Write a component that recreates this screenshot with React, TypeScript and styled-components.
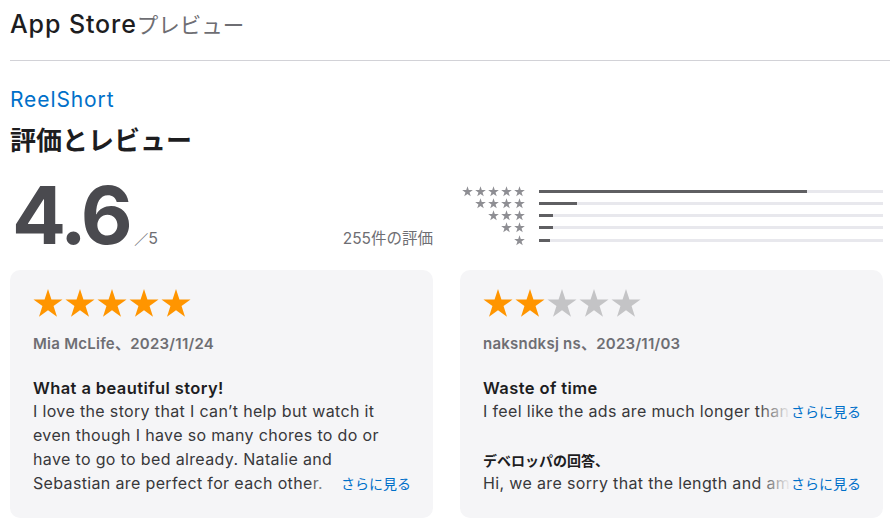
import React from "react";
import styled, { createGlobalStyle } from "styled-components";

const GlobalStyle = createGlobalStyle`
  html, body { margin: 0; padding: 0; background: #ffffff; }
  body {
    font-family: Inter, "Noto Sans CJK JP", sans-serif;
    color: #1d1d1f;
    -webkit-font-smoothing: antialiased;
  }
  * { box-sizing: border-box; }
`;

const CJK = `"Noto Sans CJK JP", Inter, sans-serif`;
const CARD_BG = "#f5f5f7";

const Page = styled.div`
  width: 891px;
  padding-left: 10px;
`;

const Header = styled.header`
  height: 61px;
  margin-right: 1px;
  padding-top: 8px;
  border-bottom: 1px solid #d2d2d7;
`;

const HeaderTitle = styled.h1`
  margin: 0;
  font-size: 25px;
  line-height: 32px;
  font-weight: 500;
  letter-spacing: 0.9px;
  color: #1d1d1f;
`;

const HeaderSub = styled.span`
  font-family: ${CJK};
  font-size: 21.5px;
  font-weight: 400;
  color: #6e6e73;
  letter-spacing: 0;
`;

const Main = styled.main`
  width: 873px;
`;

const AppName = styled.a`
  display: block;
  margin-top: 26px;
  font-size: 21px;
  line-height: 26px;
  letter-spacing: 0.9px;
  color: #0070c9;
  text-decoration: none;
`;

const SectionTitle = styled.h2`
  margin: 10px 0 0;
  font-family: ${CJK};
  font-size: 26px;
  line-height: 32px;
  font-weight: 700;
  color: #1d1d1f;
`;

const TwoCols = styled.div<{ $top: number }>`
  display: grid;
  grid-template-columns: 423px 423px;
  column-gap: 27px;
  align-items: start;
  margin-top: ${(p) => p.$top}px;
`;

const Summary = styled.div`
  display: flex;
  align-items: baseline;
  padding-left: 2px;
`;

const Score = styled.span`
  font-size: 80px;
  line-height: 80px;
  font-weight: 700;
  letter-spacing: -3.5px;
  color: #4a4a4f;
`;

const OutOf = styled.span`
  margin-left: 5px;
  font-size: 16px;
  color: #6e6e73;
`;

const Slash = styled.span`
  font-family: ${CJK};
  font-size: 14px;
`;

const Count = styled.span`
  margin-left: auto;
  font-size: 15.5px;
  color: #6e6e73;
`;

const Histogram = styled.div`
  display: grid;
  grid-template-columns: 65px 1fr;
  grid-auto-rows: 12.25px;
  column-gap: 14px;
  align-items: center;
  margin-top: 10px;
`;

const StarRow = styled.div<{ $gap: number }>`
  display: flex;
  justify-content: flex-end;
  align-items: center;
  gap: ${(p) => p.$gap}px;
`;

const CardStars = styled(StarRow)`
  justify-content: flex-start;
  height: 28px;
`;

const BarTrack = styled.div`
  height: 3px;
  background: #e8e8ed;
`;

const BarFill = styled.div`
  height: 100%;
  background: #5f5f62;
`;

const Card = styled.article`
  position: relative;
  height: 248px;
  padding: 19px 22px 0 23px;
  border-radius: 10px;
  background: ${CARD_BG};
`;

const Reviewer = styled.div`
  margin-top: 17px;
  font-size: 15px;
  line-height: 20px;
  font-weight: 600;
  letter-spacing: 0.25px;
  color: #6e6e73;
`;

const ReviewTitle = styled.h3`
  margin: 23px 0 0;
  font-size: 16.5px;
  line-height: 22px;
  font-weight: 600;
  letter-spacing: 0.4px;
  color: #1d1d1f;
`;

const ReviewBody = styled.p<{ $lines: number }>`
  position: relative;
  margin: 0;
  font-size: 16px;
  line-height: 24px;
  letter-spacing: 0.35px;
  color: #38383b;
  max-height: ${(p) => p.$lines * 24}px;
  overflow: hidden;
  white-space: ${(p) => (p.$lines === 1 ? "nowrap" : "normal")};
`;

const DevTitle = styled.h4`
  margin: 27px 0 0;
  font-family: ${CJK};
  font-size: 14px;
  line-height: 20px;
  font-weight: 700;
  color: #1d1d1f;
`;

const DevBody = styled(ReviewBody)`
  margin-top: 1px;
`;

const More = styled.a`
  position: absolute;
  right: 0;
  bottom: 0;
  padding-left: 34px;
  font-family: ${CJK};
  font-size: 14px;
  line-height: 24px;
  letter-spacing: 0;
  color: #0070c9;
  text-decoration: none;
  background: linear-gradient(to right, rgba(245, 245, 247, 0) 0, ${CARD_BG} 34px);
`;

function starPoints(cx: number, cy: number, R: number) {
  const r = R * 0.382;
  const pts: string[] = [];
  for (let i = 0; i < 10; i++) {
    const a = ((-90 + i * 36) * Math.PI) / 180;
    const rad = i % 2 === 0 ? R : r;
    pts.push(`${(cx + rad * Math.cos(a)).toFixed(2)},${(cy + rad * Math.sin(a)).toFixed(2)}`);
  }
  return pts.join(" ");
}

const Star = ({ size, color }: { size: "sm" | "lg"; color: string }) => {
  if (size === "sm") {
    return (
      <svg width="11" height="11" viewBox="0 0 11 11">
        <polygon points={starPoints(5.5, 5.8, 5.6)} fill={color} />
      </svg>
    );
  }
  return (
    <svg width="30" height="28" viewBox="0 0 30 28">
      <polygon points={starPoints(15, 15.3, 15.3)} fill={color} />
    </svg>
  );
};

const histogram = [
  { stars: 5, pct: 78 },
  { stars: 4, pct: 11 },
  { stars: 3, pct: 4 },
  { stars: 2, pct: 4 },
  { stars: 1, pct: 3.2 },
];

const Rating = ({ value }: { value: number }) => (
  <CardStars $gap={2}>
    {[0, 1, 2, 3, 4].map((i) => (
      <Star key={i} size="lg" color={i < value ? "#ff9500" : "#c4c4c6"} />
    ))}
  </CardStars>
);

export default function App() {
  return (
    <>
      <GlobalStyle />
      <Page>
        <Header>
          <HeaderTitle>
            App Store<HeaderSub>プレビュー</HeaderSub>
          </HeaderTitle>
        </Header>
        <Main>
          <AppName href="#">ReelShort</AppName>
          <SectionTitle>評価とレビュー</SectionTitle>
          <TwoCols $top={20}>
            <Summary>
              <Score>4.6</Score>
              <OutOf>
                <Slash>／</Slash>5
              </OutOf>
              <Count>255件の評価</Count>
            </Summary>
            <Histogram>
              {histogram.map((row) => (
                <React.Fragment key={row.stars}>
                  <StarRow $gap={2}>
                    {Array.from({ length: row.stars }).map((_, i) => (
                      <Star key={i} size="sm" color="#8e8e93" />
                    ))}
                  </StarRow>
                  <BarTrack>
                    <BarFill style={{ width: `${row.pct}%` }} />
                  </BarTrack>
                </React.Fragment>
              ))}
            </Histogram>
          </TwoCols>
          <TwoCols $top={15}>
            <Card>
              <Rating value={5} />
              <Reviewer>Mia McLife、2023/11/24</Reviewer>
              <ReviewTitle>What a beautiful story!</ReviewTitle>
              <ReviewBody $lines={4}>
                I love the story that I can’t help but watch it even though I have so many chores
                to do or have to go to bed already. Natalie and Sebastian are perfect for each
                other. Wholeheartedly recommending this wonderful drama to all of my friends.
                <More href="#">さらに見る</More>
              </ReviewBody>
            </Card>
            <Card>
              <Rating value={2} />
              <Reviewer>naksndksj ns、2023/11/03</Reviewer>
              <ReviewTitle>Waste of time</ReviewTitle>
              <ReviewBody $lines={1}>
                I feel like the ads are much longer than the actual episodes.
                <More href="#">さらに見る</More>
              </ReviewBody>
              <DevTitle>デベロッパの回答、</DevTitle>
              <DevBody $lines={1}>
                Hi, we are sorry that the length and amount of ads affected your experience.
                <More href="#">さらに見る</More>
              </DevBody>
            </Card>
          </TwoCols>
        </Main>
      </Page>
    </>
  );
}
